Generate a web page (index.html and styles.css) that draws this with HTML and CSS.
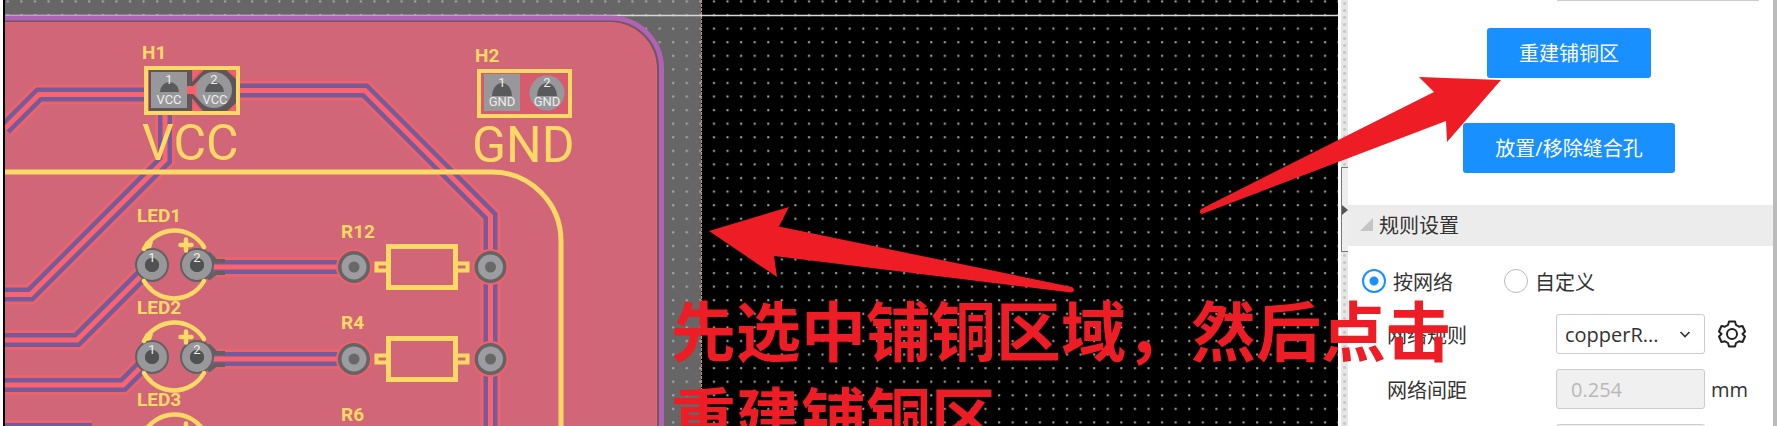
FILE: index.html
```html
<!DOCTYPE html>
<html lang="zh-CN">
<head>
<meta charset="utf-8">
<title>PCB</title>
<link rel="stylesheet" href="styles.css">
</head>
<body>
<div class="app">
  <main class="canvas">
    <svg class="board" role="img" aria-label="PCB">
      <defs>
        <pattern id="grid" x="0.8" y="-5.5" width="13.58" height="13.58" patternUnits="userSpaceOnUse">
          <rect x="6" y="6" width="2" height="2" fill="#adadad"/>
        </pattern>
        <g id="traces" fill="none">
          <path d="M5 128.500L39 94.500H150"/>
          <path d="M236 90.500H365L490.500 216V430"/>
          <path d="M165 110V160L30.500 294.500H5"/>
          <path d="M5 340H77L152 265"/>
          <path d="M5 385H123L152 356"/>
          <path d="M5 430H92"/>
          <path d="M197 267H354"/>
          <path d="M197 359H354"/>
        </g>
        <g id="via">
          <circle r="18" fill="#f0616c"/>
          <circle r="16" fill="#646464"/>
          <circle r="12.500" fill="#9d9da1"/>
          <circle r="5.500" fill="#686868"/>
        </g>
        <g id="ledpad">
          <circle r="17" fill="#646062"/>
          <circle r="11" fill="#555" stroke="#98989b" stroke-width="8"/>
          <circle r="7" fill="#505252"/>
        </g>
        <g id="led">
          <use href="#ledpad" x="152" y="265"/>
          <use href="#ledpad" x="197" y="265"/>
          <g fill="none" stroke="#ffd966" stroke-width="4.500" stroke-linecap="round">
            <path d="M144 249A34.500 34.500 0 0 1 204 247M144 281A34.500 34.500 0 0 0 204 281"/>
            <path d="M180.500 245H191.500M186 239.500V250.500"/>
          </g>
          <path d="M142 250L146 241L153 242L151 248ZM142 278L153 288L148 288Z" fill="#ffd966"/>
        </g>
        <g id="resistor">
          <use href="#via" x="354" y="267"/>
          <use href="#via" x="490.500" y="267"/>
          <path d="M352 267H335M490.500 265V251M490.500 269V283" stroke="#fd636e" stroke-width="5" visibility="hidden"/>
          <g fill="none" stroke="#ffd966">
            <rect x="388.500" y="246.500" width="67" height="41" stroke-width="5"/>
            <path d="M386 263.500H376.500V270.500H386M458 263.500H467.500V270.500H458" stroke-width="4"/>
          </g>
        </g>
      </defs>
      <rect width="100%" height="100%" fill="#000"/>
      <rect width="701" height="100%" fill="#666"/>
      <rect width="100%" height="100%" fill="url(#grid)"/>
      <path d="M701.500 0V2000" stroke="#c98f8b" stroke-dasharray="3 1"/>
      <path d="M0 15.500H4000" stroke="#d8d8d8" stroke-width="1.500"/>
      <path d="M-10 18H611A50.500 50.500 0 0 1 661.500 68.500V2000H-10Z" fill="#6c5862" stroke="#b062b4" stroke-width="5"/>
      <path d="M-10 22.500H611A46 46 0 0 1 656.500 68.500V2000H-10Z" fill="#d06677" stroke="#f0616c" stroke-width="1"/>
      <use href="#traces" stroke="#ec626d" stroke-width="20"/>
      <use href="#traces" stroke="#735c99" stroke-width="14"/>
      <use href="#traces" stroke="#fd636e" stroke-width="5"/>
      <path d="M0 172H492A69 69 0 0 1 561 241V2000" fill="none" stroke="#ffd966" stroke-width="5"/>
      <path d="M208 253L216 261H225M208 279L216 273H225" fill="none" stroke="#646062" stroke-width="4"/>
      <path d="M208 345L216 353H225M208 371L216 365H225" fill="none" stroke="#646062" stroke-width="4"/>
      <use href="#led"/>
      <use href="#led" y="92"/>
      <use href="#led" y="184"/>
      <use href="#resistor"/>
      <use href="#resistor" y="92"/>
      <use href="#resistor" y="184"/>

      <rect x="148" y="70" width="89" height="41" fill="#e45c6b"/>
      <path d="M149 70H192V82L204 70H226L237 80V102L226 112H204L192 98V111H149Z" fill="#5d5759"/>
      <path d="M193 86L201 78V102L193 94H187V86ZM193 70H201L193 79ZM193 111H201L193 102ZM237 70V78L229 70ZM237 111V103L229 111Z" fill="#f95f6c"/>
      <rect x="151" y="72" width="36" height="36" fill="#98989b"/>
      <circle cx="214" cy="90" r="18" fill="#98989b"/>
      <path d="M160 92A9.500 10 0 0 1 179 92ZM205 92A9.500 10 0 0 1 224 92Z" fill="#585a5b"/>
      <rect x="146" y="68" width="92" height="45" fill="none" stroke="#ffd966" stroke-width="4"/>
      <rect x="479" y="71" width="91" height="45" fill="#d65b6d" stroke="#ffd966" stroke-width="4"/>
      <rect x="484" y="74" width="36" height="37" fill="#98989b"/>
      <circle cx="547" cy="93" r="17.500" fill="#98989b"/>
      <path d="M492 96A10 13 0 0 1 512 96ZM537 96A10 13 0 0 1 557 96Z" fill="#585a5b"/>

      <g class="pin">
        <text x="169" y="84">1</text><text x="214" y="84">2</text>
        <text x="169" y="104">VCC</text><text x="215" y="104">VCC</text>
        <text x="502" y="87">1</text><text x="547" y="87">2</text>
        <text x="502" y="106">GND</text><text x="547" y="106">GND</text>
        <text x="152" y="262">1</text><text x="197" y="262">2</text>
        <text x="152" y="354">1</text><text x="197" y="354">2</text>
      </g>
      <g class="ref">
        <text x="142" y="59">H1</text><text x="475" y="62">H2</text>
        <text x="137" y="222">LED1</text><text x="137" y="314">LED2</text><text x="137" y="406">LED3</text>
        <text x="341" y="238">R12</text><text x="341" y="329">R4</text><text x="341" y="421">R6</text>
      </g>
      <g class="net">
        <text x="142" y="160">VCC</text><text x="472" y="162">GND</text>
      </g>
      <rect width="3" height="100%" fill="#fff"/>
      <rect x="3" width="2" height="100%" fill="#000"/>
    </svg>
  </main>

  <div class="splitter">
    <button class="handle" type="button" aria-label="收起"><svg class="caret" viewBox="0 0 6 10"><path d="M0 0L6 5L0 10Z" fill="#555"/></svg></button>
  </div>

  <aside class="panel">
    <div class="stub top"></div>
    <div class="actions">
      <button class="primary" type="button">重建铺铜区</button>
      <button class="primary" type="button">放置/移除缝合孔</button>
    </div>
    <h2 class="section"><svg class="fold" viewBox="0 0 13 13"><path d="M13 0V13H0Z" fill="#c4c4c4"/></svg>规则设置</h2>
    <div class="radios">
      <label class="radio"><input type="radio" name="mode" checked>按网络</label>
      <label class="radio"><input type="radio" name="mode">自定义</label>
    </div>
    <div class="rows">
      <div class="row">
        <label class="name" for="rule">网络规则</label>
        <div class="pick">
          <select class="field" id="rule"><option>copperR...</option></select>
          <svg class="chevron" viewBox="0 0 12 8"><path d="M1.500 1L6 5.500L10.500 1" fill="none" stroke="#333" stroke-width="1.600"/></svg>
        </div>
        <button class="gear" type="button" aria-label="设置">
          <svg class="cog" viewBox="0 0 28 28" fill="none" stroke="#222" stroke-width="2" stroke-linejoin="round"><path d="M11 1.500H17L18 5L21 6.700L24.500 6L27 11.500L24.500 14L27 16.500L24.500 22L21 21.300L18 23L17 26.500H11L10 23L7 21.300L3.500 22L1 16.500L3.500 14L1 11.500L3.500 6L7 6.700L10 5Z"/><circle cx="14" cy="14" r="5"/></svg>
        </button>
      </div>
      <div class="row">
        <label class="name" for="gap">网络间距</label>
        <input class="field" id="gap" value="0.254" disabled>
        <span class="unit">mm</span>
      </div>
      <div class="row"><span class="name"></span><div class="field"></div></div>
    </div>
  </aside>

  <svg class="arrows" aria-hidden="true">
    <g fill="#ee1c24">
      <path d="M709 231L789 207L779 226.500L1072 287Q1077 291 1071 292.500L774 256L777 277Z"/>
      <path d="M1501 80L1419 77L1434 92L1201 209Q1198 213 1202 214L1446 121L1447 142Z"/>
    </g>
  </svg>
  <p class="note">先选中铺铜区域，然后点击<br>重建铺铜区</p>
</div>
</body>
</html>
```
FILE: styles.css
```css
* { box-sizing: border-box; }

body {
  margin: 0;
  font-family: "Open Sans", "Noto Sans CJK SC", sans-serif;
  font-size: 20px;
  color: #333;
}

.app {
  position: relative;
  display: flex;
  height: 100vh;
  overflow: hidden;
}

.canvas { flex: 1; min-width: 0; }
.board { display: block; width: 100%; height: 100%; }

.pin { font: 13px Roboto, sans-serif; fill: #ededed; text-anchor: middle; }
.ref { font: 700 19px Roboto, sans-serif; fill: #ffd966; }
.net { font: 400 50px Roboto, sans-serif; fill: #ffd966; }

.splitter {
  display: flex;
  align-items: center;
  width: 10px;
  padding-bottom: 7px;
  border-left: 3px solid #fff;
  background: radial-gradient(circle, #c8c8c8 1px, #e6e6e6 2px) 0 0 / 7px 7px;
}

.handle {
  display: flex;
  align-items: center;
  width: 7px;
  height: 85px;
  padding: 0;
  border: 1px solid #777;
  border-right: 0;
  background: #eee;
}

.caret { flex: none; width: 6px; height: 10px; }

.panel {
  width: 429px;
  border-right: 4px solid #bbb;
  background: #fff;
}

.stub.top {
  width: 202px;
  height: 1px;
  margin-left: 209px;
  background: #ccc;
}

.actions {
  display: flex;
  flex-direction: column;
  align-items: center;
  gap: 45px;
  padding: 27px 0 32px 17px;
}

.primary {
  height: 50px;
  padding: 0 32px 2px;
  border: 0;
  border-radius: 3px;
  background: #1890ff;
  color: #fff;
  font: inherit;
}

.section {
  display: flex;
  align-items: center;
  gap: 6px;
  height: 41px;
  margin: 0;
  padding: 0 0 3px 12px;
  background: #ececec;
  font-size: 20px;
  font-weight: 400;
}

.fold { width: 13px; height: 13px; }

.radios {
  display: flex;
  gap: 51px;
  padding: 19px 0 17px 14px;
}

.radio {
  display: flex;
  align-items: center;
  gap: 7px;
  height: 32px;
}

.radio input {
  appearance: none;
  width: 24px;
  height: 24px;
  margin: 0;
  border: 1px solid #bbb;
  border-radius: 50%;
}

.radio input:checked {
  border: 2px solid #1890ff;
  background: radial-gradient(circle, #1890ff 4px, #fff 5px);
}

.rows {
  display: grid;
  gap: 15px;
  padding-left: 39px;
}

.row { display: flex; align-items: center; }
.name { width: 169px; }
.pick { position: relative; }

.field {
  display: block;
  width: 149px;
  height: 40px;
  padding: 0 14px;
  border: 1px solid #ccc;
  border-radius: 3px;
  background: #f0f0f0;
  color: #b8b8b8;
  font: inherit;
}

select.field {
  appearance: none;
  padding: 0 8px;
  background: #fff;
  color: #333;
}

.chevron {
  position: absolute;
  right: 14px;
  top: 17px;
  width: 12px;
  height: 8px;
}

.gear {
  margin-left: 13px;
  padding: 0;
  border: 0;
  background: none;
}

.cog { display: block; width: 28px; height: 28px; }
.unit { margin-left: 6px; }

.arrows {
  position: absolute;
  inset: 0;
  width: 100%;
  height: 100%;
  pointer-events: none;
}

.note {
  position: absolute;
  left: 671px;
  top: 285px;
  margin: 0;
  color: #ee1c24;
  font: 700 65px/86px "Noto Sans CJK SC", sans-serif;
  white-space: nowrap;
  pointer-events: none;
}
```
